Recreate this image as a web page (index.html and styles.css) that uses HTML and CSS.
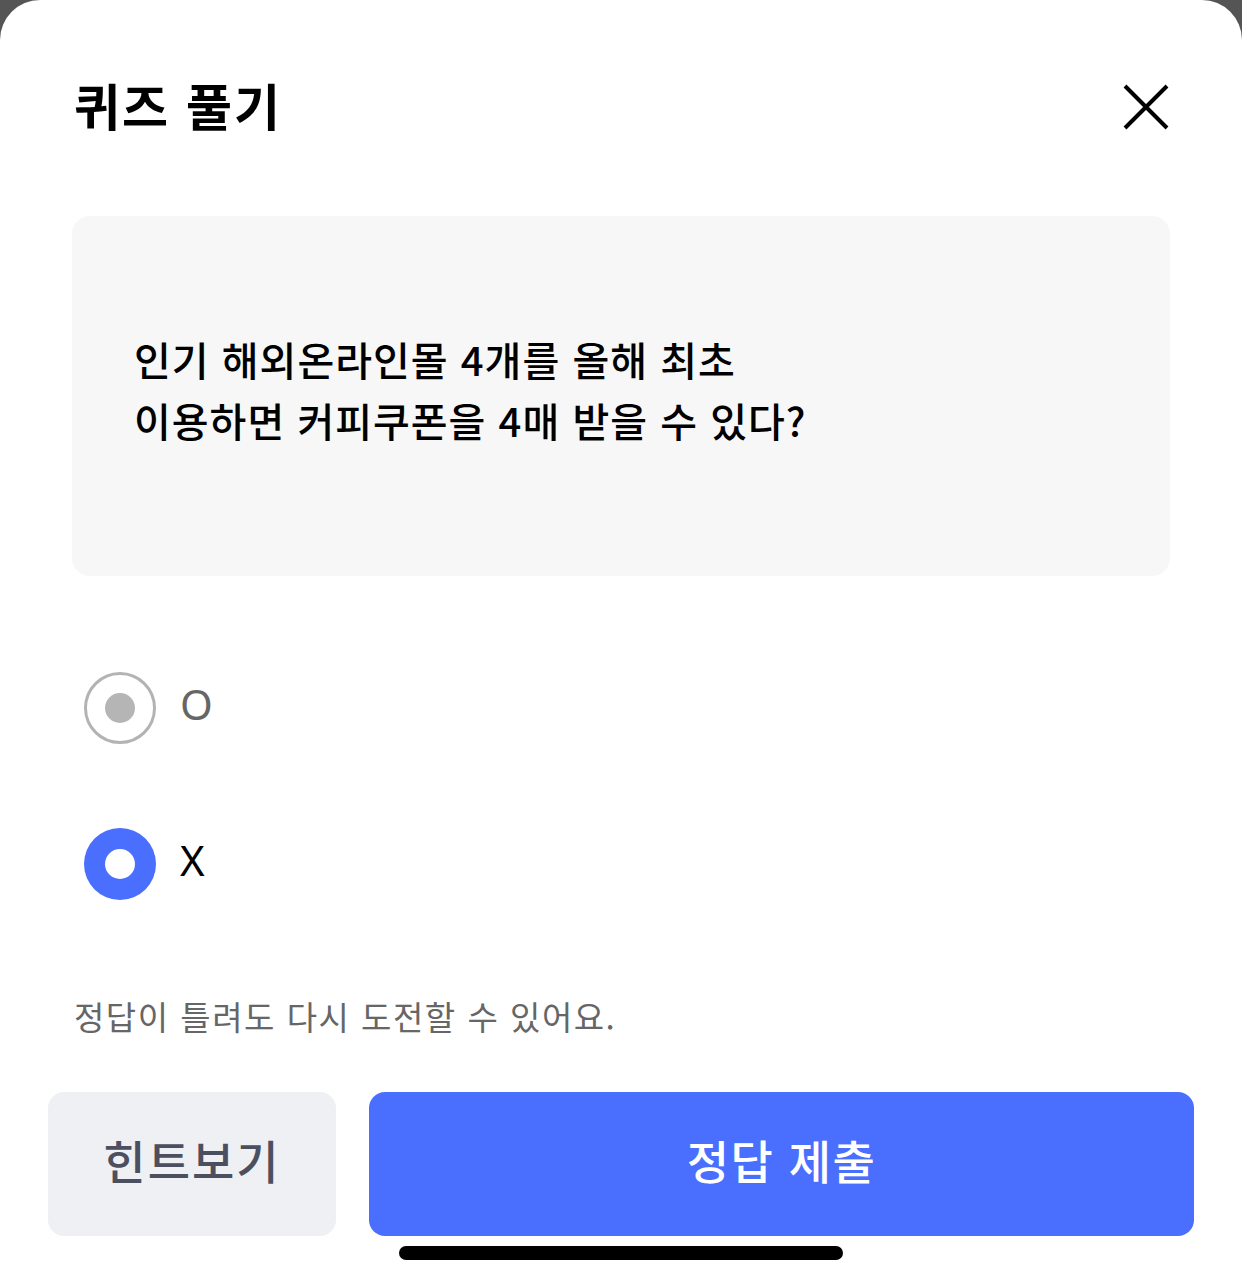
FILE: index.html
```html
<!DOCTYPE html>
<html lang="ko">
<head>
    <meta charset="UTF-8">
    <meta name="viewport" content="width=device-width, initial-scale=1.0">
    <title>퀴즈 풀기</title>
    <link rel="stylesheet" href="styles.css">
</head>
<body>
    <div class="sheet">
        <!-- Header -->
        <div class="sheet-header">
            <h1>퀴즈 풀기</h1>
            <button class="close-btn" aria-label="닫기">
                <svg width="48" height="48" viewBox="0 0 48 48">
                    <path d="M3 3 L45 45 M45 3 L3 45" stroke="#000" stroke-width="4" fill="none"/>
                </svg>
            </button>
        </div>

        <!-- Question -->
        <div class="question-box">
            <p>인기 해외온라인몰 4개를 올해 최초<br>이용하면 커피쿠폰을 4매 받을 수 있다?</p>
        </div>

        <!-- Options -->
        <div class="options">
            <label class="option">
                <span class="radio"></span>
                <span class="option-label dim">O</span>
            </label>
            <label class="option">
                <span class="radio checked"></span>
                <span class="option-label">X</span>
            </label>
        </div>

        <p class="notice">정답이 틀려도 다시 도전할 수 있어요.</p>

        <!-- Buttons -->
        <div class="actions">
            <button class="btn btn-hint">힌트보기</button>
            <button class="btn btn-submit">정답 제출</button>
        </div>

        <div class="home-bar"></div>
    </div>
</body>
</html>
```

FILE: styles.css
```css
body {
    font-family: 'Noto Sans CJK KR', 'Noto Sans', sans-serif;
    margin: 0;
    padding: 0;
    background-color: #555;
    color: #111;
}

.sheet {
    height: 1268px;
    background: #fff;
    border-radius: 40px 40px 0 0;
    overflow: hidden;
}

.sheet-header {
    display: flex;
    align-items: center;
    justify-content: space-between;
    height: 110px;
    padding: 52px 72px 0 74px;
}

h1 {
    margin: 0 0 6px;
    font-size: 50px;
    font-weight: 700;
    color: #000;
    letter-spacing: 2px;
}

.close-btn {
    border: none;
    background: none;
    padding: 0;
    width: 48px;
    height: 48px;
    cursor: pointer;
}

.close-btn svg {
    display: block;
}

.question-box {
    margin: 54px 72px 0;
    height: 360px;
    box-sizing: border-box;
    padding: 0 62px 12px;
    background: #f7f7f7;
    border-radius: 18px;
    display: flex;
    align-items: center;
}

.question-box p {
    margin: 0;
    font-size: 40px;
    font-weight: 500;
    line-height: 61px;
    color: #000;
    letter-spacing: 1px;
}

.options {
    margin: 96px 0 0 84px;
    display: flex;
    flex-direction: column;
    gap: 84px;
}

.option {
    display: flex;
    align-items: center;
    gap: 24px;
    height: 72px;
}

.radio {
    width: 72px;
    height: 72px;
    box-sizing: border-box;
    border: 3px solid #b3b3b3;
    border-radius: 50%;
    display: flex;
    align-items: center;
    justify-content: center;
}

.radio::after {
    content: '';
    width: 30px;
    height: 30px;
    border-radius: 50%;
    background: #b5b5b5;
}

.radio.checked {
    border: none;
    background: #4a6fff;
}

.radio.checked::after {
    background: #fff;
}

.option-label {
    font-family: 'Noto Sans', sans-serif;
    font-size: 42px;
    color: #000;
    padding-bottom: 10px;
}

.option-label.dim {
    color: #666;
}

.notice {
    margin: 92px 0 0 74px;
    font-size: 33px;
    line-height: 48px;
    color: #666;
    letter-spacing: 1.5px;
}

.actions {
    display: flex;
    gap: 33px;
    margin: 52px 48px 0;
}

.btn {
    height: 144px;
    border: none;
    border-radius: 16px;
    padding: 0 0 10px;
    font-family: inherit;
    font-size: 46px;
    font-weight: 500;
    cursor: pointer;
}

.btn-hint {
    width: 288px;
    background: #eef0f4;
    color: #4b4f60;
    letter-spacing: 2px;
}

.btn-submit {
    flex: 1;
    background: #4a6fff;
    color: #fff;
    letter-spacing: 1.5px;
}

.home-bar {
    width: 444px;
    height: 14px;
    margin: 10px auto 0;
    background: #000;
    border-radius: 7px;
}
```
